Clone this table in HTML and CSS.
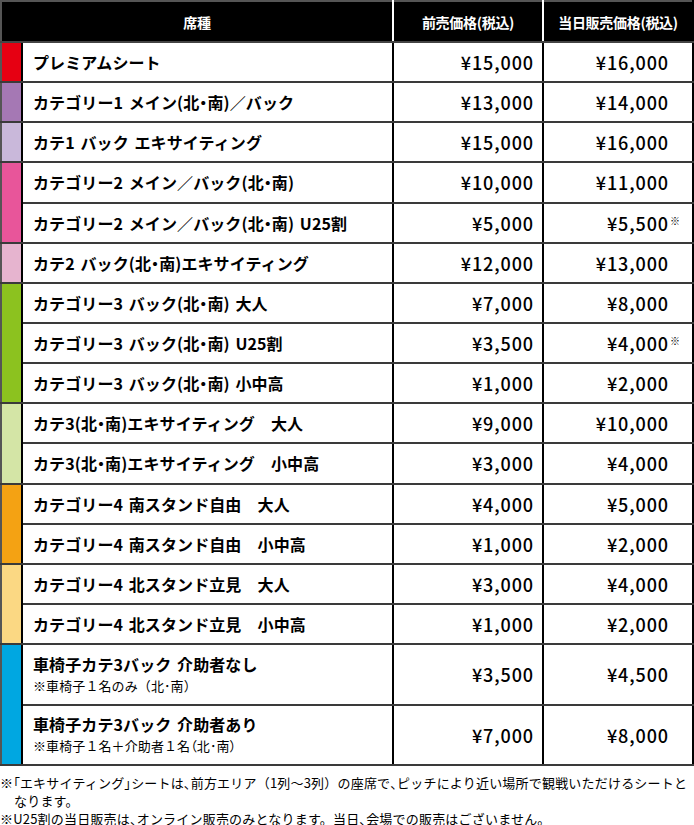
FILE: index.html
```
<!DOCTYPE html>
<html lang="ja">
<head>
<meta charset="utf-8">
<link rel="stylesheet" href="styles.css">
</head>
<body>
<table class="price-table">
  <colgroup>
    <col class="c-strip"><col class="c-name"><col class="c-price"><col class="c-price">
  </colgroup>
  <thead>
    <tr>
      <th colspan="2">席種</th>
      <th>前売価格<span class="paren">(税込)</span></th>
      <th>当日販売価格<span class="paren">(税込)</span></th>
    </tr>
  </thead>
  <tbody>
    <tr><td class="strip s-red"></td><td class="name">プレミアムシート</td><td class="p1">¥15,000</td><td class="p2">¥16,000</td></tr>
    <tr><td class="strip s-purple"></td><td class="name">カテゴリー1 メイン<span class="paren">(北・南)</span>／バック</td><td class="p1">¥13,000</td><td class="p2">¥14,000</td></tr>
    <tr><td class="strip s-lpurple"></td><td class="name">カテ1 バック エキサイティング</td><td class="p1">¥15,000</td><td class="p2">¥16,000</td></tr>
    <tr><td class="strip s-pink" rowspan="2"></td><td class="name">カテゴリー2 メイン／バック<span class="paren">(北・南)</span></td><td class="p1">¥10,000</td><td class="p2">¥11,000</td></tr>
    <tr><td class="name">カテゴリー2 メイン／バック<span class="paren">(北・南)</span> U25割</td><td class="p1">¥5,000</td><td class="p2">¥5,500<span class="mark">※</span></td></tr>
    <tr><td class="strip s-lpink"></td><td class="name">カテ2 バック<span class="paren">(北・南)</span>エキサイティング</td><td class="p1">¥12,000</td><td class="p2">¥13,000</td></tr>
    <tr><td class="strip s-green" rowspan="3"></td><td class="name">カテゴリー3 バック<span class="paren">(北・南)</span> 大人</td><td class="p1">¥7,000</td><td class="p2">¥8,000</td></tr>
    <tr><td class="name">カテゴリー3 バック<span class="paren">(北・南)</span> U25割</td><td class="p1">¥3,500</td><td class="p2">¥4,000<span class="mark">※</span></td></tr>
    <tr><td class="name">カテゴリー3 バック<span class="paren">(北・南)</span> 小中高</td><td class="p1">¥1,000</td><td class="p2">¥2,000</td></tr>
    <tr><td class="strip s-lgreen" rowspan="2"></td><td class="name">カテ3<span class="paren">(北・南)</span>エキサイティング　大人</td><td class="p1">¥9,000</td><td class="p2">¥10,000</td></tr>
    <tr><td class="name">カテ3<span class="paren">(北・南)</span>エキサイティング　小中高</td><td class="p1">¥3,000</td><td class="p2">¥4,000</td></tr>
    <tr><td class="strip s-orange" rowspan="2"></td><td class="name">カテゴリー4 南スタンド自由　大人</td><td class="p1">¥4,000</td><td class="p2">¥5,000</td></tr>
    <tr><td class="name">カテゴリー4 南スタンド自由　小中高</td><td class="p1">¥1,000</td><td class="p2">¥2,000</td></tr>
    <tr><td class="strip s-lorange" rowspan="2"></td><td class="name">カテゴリー4 北スタンド立見　大人</td><td class="p1">¥3,000</td><td class="p2">¥4,000</td></tr>
    <tr><td class="name">カテゴリー4 北スタンド立見　小中高</td><td class="p1">¥1,000</td><td class="p2">¥2,000</td></tr>
    <tr class="tall"><td class="strip s-cyan" rowspan="2"></td><td class="name">車椅子カテ3バック 介助者なし<span class="sub">※車椅子１名のみ（北･南）</span></td><td class="p1">¥3,500</td><td class="p2">¥4,500</td></tr>
    <tr class="tall"><td class="name">車椅子カテ3バック 介助者あり<span class="sub">※車椅子１名＋介助者１名<span class="paren">（北･南）</span></span></td><td class="p1">¥7,000</td><td class="p2">¥8,000</td></tr>
  </tbody>
</table>
<div class="notes">
  <p class="note">※<span class="paren">「</span>エキサイティング<span class="paren">」</span>シートは<span class="paren">、</span>前方エリア（1列～3列）の座席で<span class="paren">、</span>ピッチにより近い場所で観戦いただけるシートとなります。</p>
  <p class="note">※U25割の当日販売は<span class="paren">、</span>オンライン販売のみとなります。当日<span class="paren">、</span>会場での販売はございません。</p>
</div>
</body>
</html>
```
FILE: styles.css
```
html, body {
  margin: 0;
  padding: 0;
  background: #fff;
}
body {
  font-family: "Noto Sans CJK JP", "Noto Sans", sans-serif;
  color: #000;
  width: 694px;
}
.price-table {
  width: 694px;
  border-collapse: collapse;
  table-layout: fixed;
  border-top: 2px solid #555;
  border-left: 2px solid #555;
  border-right: 2px solid #000;
}
.c-strip { width: 21px; }
.c-name { width: 371px; }
.c-price { width: 150px; }

.price-table th {
  background: #000;
  color: #fff;
  font-size: 14px;
  font-weight: 700;
  height: 39px;
  padding: 0;
  text-align: center;
  border-right: 2px solid #fff;
  border-bottom: 2px solid #444;
  letter-spacing: -0.3px;
}
.price-table th:last-child { border-right: 2px solid #000; }
.price-table td {
  height: 38.15px;
  padding: 0;
  border-bottom: 2px solid #3a3a3a;
  border-right: 2px solid #000;
}
.price-table tr.tall td { height: 58.5px; }
.paren {
  font-feature-settings: "palt";
}
.name {
  font-size: 16px;
  font-weight: 700;
  padding-left: 10px !important;
  letter-spacing: 0.1px;
  word-spacing: 2px;
  line-height: 20px;
}
.sub {
  display: block;
  font-size: 13px;
  font-weight: 400;
  line-height: 18px;
  margin-top: 3px;
  word-spacing: 0;
}
.p1, .p2 {
  font-size: 18px;
  font-weight: 500;
  text-align: right;
  letter-spacing: 0.9px;
}
.p1 { padding-right: 8px !important; }
.p2 { padding-right: 23px !important; position: relative; }
.mark {
  position: absolute;
  font-size: 10px;
  font-weight: 400;
  letter-spacing: 0;
  top: 9px;
  right: 12px;
}
.strip { border-right: 2px solid #000; }
.s-red { background: #e60012; }
.s-purple { background: #a578b4; }
.s-lpurple { background: #c9b8da; }
.s-pink { background: #e8559a; }
.s-lpink { background: #e6b4cf; }
.s-green { background: #8cc21f; }
.s-lgreen { background: #d4e5a6; }
.s-orange { background: #f4a213; }
.s-lorange { background: #fbd883; }
.s-cyan { background: #00a7e1; }

.notes {
  margin-top: 8px;
  font-size: 13px;
  line-height: 18px;
  letter-spacing: 0.2px;
}
.note {
  margin: 0;
  padding-left: 14px;
  text-indent: -14px;
}
```
